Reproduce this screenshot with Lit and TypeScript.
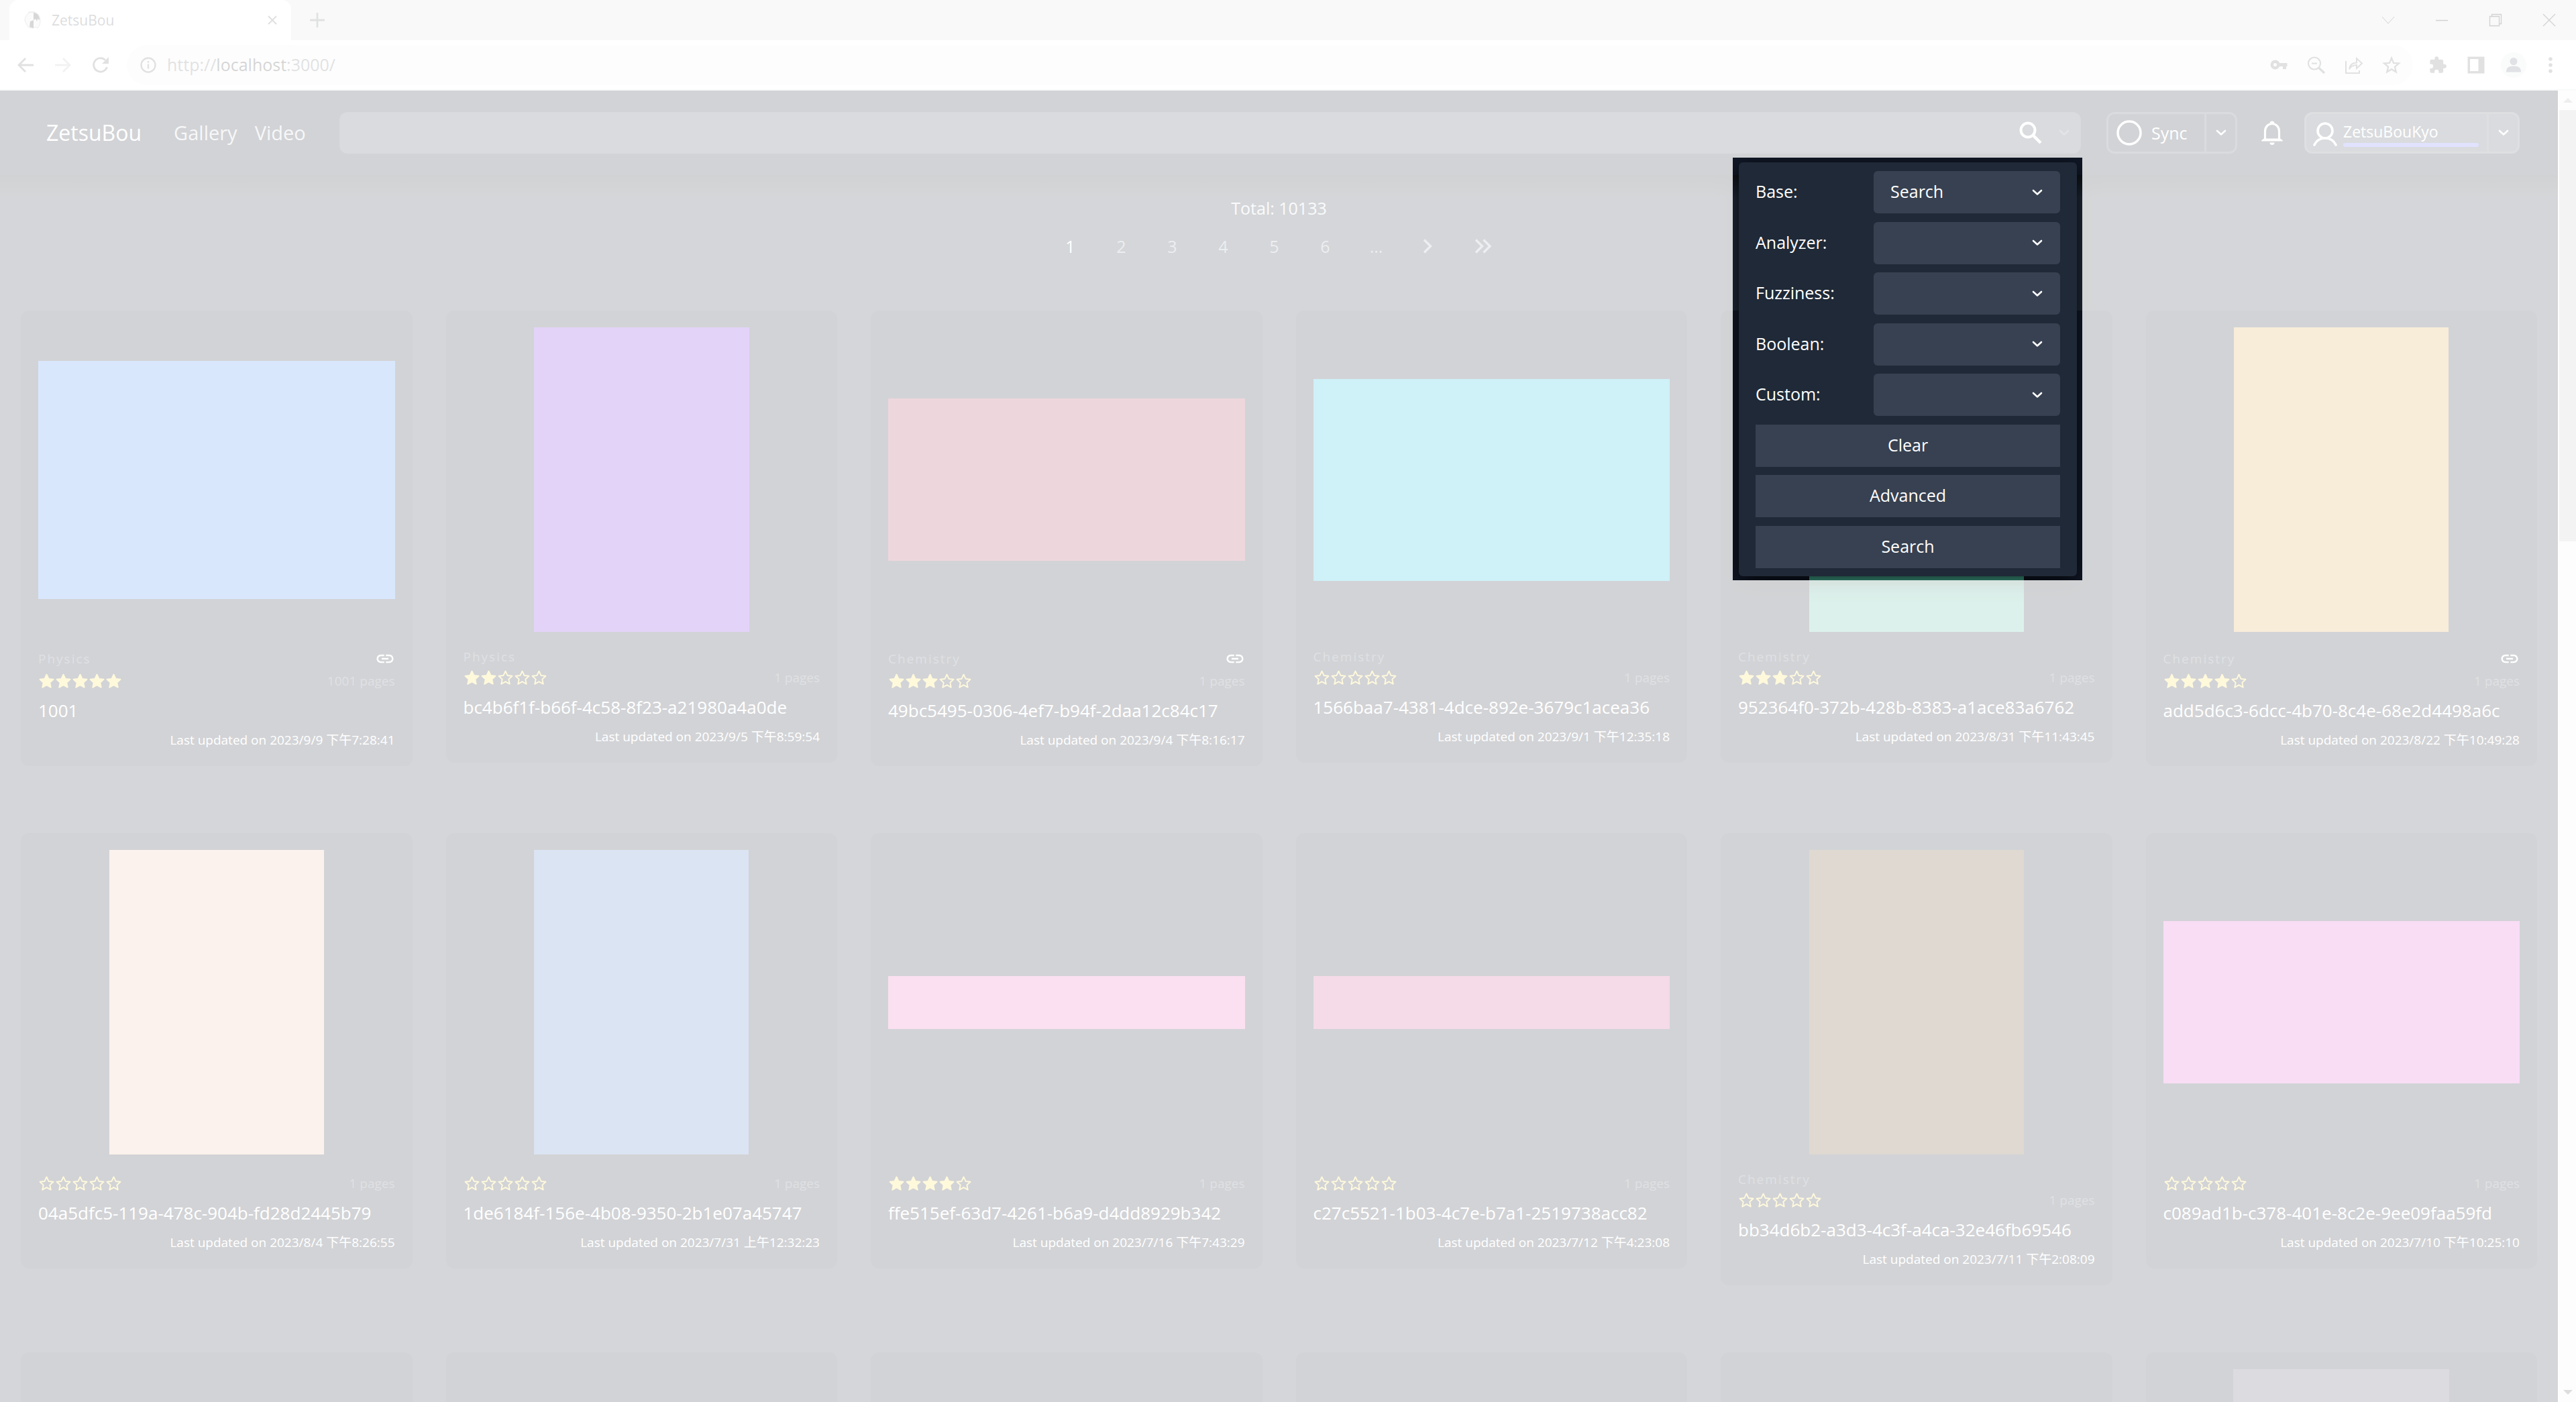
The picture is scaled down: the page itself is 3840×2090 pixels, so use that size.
import { LitElement, html, css, svg } from "lit";
import { customElement, property } from "lit/decorators.js";

interface Item {
  category?: string;
  linked?: boolean;
  rating: number;
  pages: number;
  title: string;
  updated: string;
  color: string;
  w: number;
  h: number;
}

const ITEMS: Item[] = [
  { category: "Physics", linked: true, rating: 5, pages: 1001, title: "1001", updated: "2023/9/9 下午7:28:41", color: "#3782f5", w: 532, h: 355 },
  { category: "Physics", rating: 2, pages: 1, title: "bc4b6f1f-b66f-4c58-8f23-a21980a4a0de", updated: "2023/9/5 下午8:59:54", color: "#6919d7", w: 321, h: 454 },
  { category: "Chemistry", linked: true, rating: 3, pages: 1, title: "49bc5495-0306-4ef7-b94f-2daa12c84c17", updated: "2023/9/4 下午8:16:17", color: "#a02d4b", w: 532, h: 242 },
  { category: "Chemistry", rating: 0, pages: 1, title: "1566baa7-4381-4dce-892e-3679c1acea36", updated: "2023/9/1 下午12:35:18", color: "#00b4d7", w: 532, h: 301 },
  { category: "Chemistry", rating: 3, pages: 1, title: "952364f0-372b-428b-8383-a1ace83a6762", updated: "2023/8/31 下午11:43:45", color: "#46b496", w: 320, h: 454 },
  { category: "Chemistry", linked: true, rating: 4, pages: 1, title: "add5d6c3-6dcc-4b70-8c4e-68e2d4498a6c", updated: "2023/8/22 下午10:49:28", color: "#d7a037", w: 320, h: 454 },
  { rating: 0, pages: 1, title: "04a5dfc5-119a-478c-904b-fd28d2445b79", updated: "2023/8/4 下午8:26:55", color: "#e6b9a0", w: 320, h: 454 },
  { rating: 0, pages: 1, title: "1de6184f-156e-4b08-9350-2b1e07a45747", updated: "2023/7/31 上午12:32:23", color: "#416ebe", w: 320, h: 454 },
  { rating: 4, pages: 1, title: "ffe515ef-63d7-4261-b6a9-d4dd8929b342", updated: "2023/7/16 下午7:43:29", color: "#e15ab4", w: 532, h: 79 },
  { rating: 0, pages: 1, title: "c27c5521-1b03-4c7e-b7a1-2519738acc82", updated: "2023/7/12 下午4:23:08", color: "#c34182", w: 532, h: 79 },
  { category: "Chemistry", rating: 0, pages: 1, title: "bb34d6b2-a3d3-4c3f-a4ca-32e46fb69546", updated: "2023/7/11 下午2:08:09", color: "#573512", w: 320, h: 454 },
  { rating: 0, pages: 1, title: "c089ad1b-c378-401e-8c2e-9ee09faa59fd", updated: "2023/7/10 下午10:25:10", color: "#d74bc8", w: 532, h: 242 },
];

const chevron = html`<svg class="chevron" viewBox="0 0 16 10" aria-hidden="true"><path d="M2 2l6 5.5L14 2" fill="none" stroke="currentColor" stroke-width="2.6" stroke-linecap="round" stroke-linejoin="round"/></svg>`;

const STAR = "M12 2.4l2.9 6.2 6.7.8-5 4.6 1.4 6.8L12 17.4l-6 3.4 1.4-6.8-5-4.6 6.7-.8z";

@customElement("star-rating")
export class StarRating extends LitElement {
  @property({ type: Number }) value = 0;
  static styles = css`
    :host { display: flex; }
    .star { width: 25px; height: 25px; display: block; }
  `;
  render() {
    return [1, 2, 3, 4, 5].map(
      (n) => html`<svg class="star" viewBox="0 0 24 24" aria-hidden="true">
        ${svg`<path d=${STAR} fill=${n <= this.value ? "#fde047" : "none"} stroke="#fde047" stroke-width="1.8" stroke-linejoin="round"/>`}
      </svg>`
    );
  }
}

@customElement("gallery-card")
export class GalleryCard extends LitElement {
  @property({ attribute: false }) item!: Item;
  static styles = css`
    :host { display: block; background: #111827; border-radius: 12px; padding: 25px 26px; color: #fff; }
    .cover { height: 454px; margin-bottom: 25px; display: flex; align-items: center; justify-content: center; }
    .cover-link { display: block; max-width: 100%; }
    .row { display: flex; align-items: center; justify-content: space-between; }
    .category { height: 25px; font-size: 19px; line-height: 25px; letter-spacing: 2px; color: #566072; }
    .category.linked { height: 30px; }
    .link { width: 30px; height: 30px; display: block; color: #fff; }
    .meta { height: 36px; }
    .pages { font-size: 19px; color: #566072; }
    .title { margin: 0; font-size: 26px; line-height: 52px; font-weight: 400; white-space: nowrap; overflow: hidden; }
    .updated { margin: 4px 0 0; font-size: 19px; line-height: 28px; text-align: right; }
  `;
  private details(it: Item) {
    return html`
      ${it.category
        ? html`<div class="row category ${it.linked ? "linked" : ""}">
            <span>${it.category}</span>
            ${it.linked
              ? html`<svg class="link" viewBox="0 0 24 24" aria-hidden="true"><path fill="currentColor" d="M3.9 12c0-1.71 1.39-3.1 3.1-3.1h4V7H7c-2.76 0-5 2.24-5 5s2.24 5 5 5h4v-1.9H7c-1.71 0-3.1-1.39-3.1-3.1zM8 13h8v-2H8v2zm9-6h-4v1.9h4c1.71 0 3.1 1.39 3.1 3.1s-1.39 3.1-3.1 3.1h-4V17h4c2.76 0 5-2.24 5-5s-2.24-5-5-5z"/></svg>`
              : ""}
          </div>`
        : ""}
      <div class="row meta">
        <star-rating .value=${it.rating}></star-rating>
        <span class="pages">${it.pages} pages</span>
      </div>
      <h3 class="title">${it.title}</h3>
      <p class="updated">Last updated on ${it.updated}</p>
    `;
  }
  render() {
    const it = this.item;
    return html`
      <div class="cover">
        <a class="cover-link" href="#" aria-label="Open gallery" style="width:${it.w}px;height:${it.h}px;background:${it.color}"></a>
      </div>
      ${it.title ? this.details(it) : ""}
    `;
  }
}

@customElement("search-panel")
export class SearchPanel extends LitElement {
  static styles = css`
    :host { display: block; position: relative; background: #1f2937; border-radius: 6px; padding: 13px 25px 12px; box-shadow: 0 8px 30px rgba(0, 0, 0, 0.8); font-size: 25px; color: #fff; }
    .fields { display: grid; height: 592px; align-content: space-between; }
    .field { display: grid; grid-template-columns: 176px 1fr; align-items: center; }
    label { padding-bottom: 3px; }
    .select { position: relative; display: flex; align-items: center; }
    .select .chevron { position: absolute; right: 26px; width: 16px; height: 10px; pointer-events: none; }
    select { appearance: none; width: 100%; height: 63px; border: 0; border-radius: 6px; background: #374151; color: #fff; font: inherit; padding: 0 25px 3px; }
    button { height: 63px; border: 0; background: #374151; color: #fff; font: inherit; padding: 0 0 3px; }
    .backdrop { position: absolute; inset: -7px -8px -6px -9px; box-shadow: 0 0 0 4000px rgba(255, 255, 255, 0.81); pointer-events: none; }
  `;
  private field(id: string, label: string, value = "") {
    return html`<div class="field">
      <label for=${id}>${label}:</label>
      <div class="select"><select id=${id}><option>${value}</option></select>${chevron}</div>
    </div>`;
  }
  render() {
    return html`
      <div class="fields">
        ${this.field("base", "Base", "Search")}
        ${this.field("analyzer", "Analyzer")}
        ${this.field("fuzziness", "Fuzziness")}
        ${this.field("boolean", "Boolean")}
        ${this.field("custom", "Custom")}
        <button type="button">Clear</button>
        <button type="button">Advanced</button>
        <button type="button">Search</button>
      </div>
      <div class="backdrop"></div>
    `;
  }
}

@customElement("browser-bar")
export class BrowserBar extends LitElement {
  static styles = css`
    :host { display: block; background: #fff; color: #5f6368; border-bottom: 2px solid #dadce0; }
    * { box-sizing: border-box; }
    svg { display: block; }
    button { border: 0; background: none; padding: 0; color: inherit; display: block; }
    .strip { height: 60px; background: #dfe0e2; display: flex; align-items: center; padding: 0 30px 0 14px; }
    .tab { width: 420px; height: 60px; background: #fff; border-radius: 14px 14px 0 0; display: flex; align-items: center; padding: 0 20px 0 22px; }
    .favicon { width: 26px; height: 28px; margin-right: 15px; }
    .name { flex: 1; font-size: 21px; color: #45484d; }
    .i16 { width: 16px; height: 16px; }
    .i24 { width: 24px; height: 24px; }
    .i28 { width: 28px; height: 28px; }
    .plus { margin-left: 28px; width: 22px; height: 22px; }
    .window { margin-left: auto; display: flex; align-items: center; gap: 60px; color: #111; }
    .window svg { width: 20px; height: 20px; }
    .toolbar { height: 73px; display: flex; align-items: center; padding: 0 31px 0 24px; }
    .nav { display: flex; gap: 28px; margin-right: 25px; }
    .nav .off { color: #bbb; }
    .address { flex: 1; height: 60px; border-radius: 30px; background: #f1f4f3; display: flex; align-items: center; padding: 0 18px 0 20px; }
    .url { flex: 1; margin-left: 16px; font-size: 25px; line-height: 32px; padding-bottom: 2px; display: flex; align-items: center; }
    .url b { font-weight: 400; color: #202124; }
    .actions { display: flex; gap: 28px; }
    .extras { display: flex; align-items: center; gap: 29px; margin-left: 23px; }
    .avatar { width: 38px; height: 38px; border-radius: 50%; background: #e4e6ea; color: #5b6478; display: grid; place-items: center; margin-left: -6px; }
    .dots { width: 14px; height: 28px; }
  `;
  render() {
    return html`
      <div class="strip">
        <div class="tab">
          <svg class="favicon" viewBox="0 0 26 28" aria-hidden="true">
            <path d="M13 2c7 0 11 6 11 13 0 5-2 9-4 11l-3-2-4 2-6-1-3-4-3-6c0-8 5-13 12-13z" fill="#e9e9e9" stroke="#999" stroke-width="1"/>
            <path d="M14 3c6 0 9 5 9 11l-3-2-1 4-2-4-3 2zM9 16l5-2v12l-6-2z" fill="#2b2b2b"/>
            <path d="M6 2h10" stroke="#888" stroke-width="1"/>
          </svg>
          <span class="name">ZetsuBou</span>
          <button aria-label="Close tab"><svg class="i16" viewBox="0 0 16 16"><path d="M2 2l12 12M14 2L2 14" stroke="currentColor" stroke-width="2.2"/></svg></button>
        </div>
        <button aria-label="New tab"><svg class="plus" viewBox="0 0 22 22"><path d="M11 1v20M1 11h20" stroke="currentColor" stroke-width="2.8" stroke-linecap="round"/></svg></button>
        <div class="window">
          <svg viewBox="0 0 20 20"><path d="M1 5l9 10 9-10" fill="none" stroke="currentColor"/></svg>
          <svg viewBox="0 0 20 20"><path d="M1 10.5h18" stroke="currentColor" stroke-width="1.5"/></svg>
          <svg viewBox="0 0 20 20"><path d="M1.5 4.5h14v14h-14zM4.5 4.5v-3h14v14h-3" fill="none" stroke="currentColor" stroke-width="1.3"/></svg>
          <svg viewBox="0 0 20 20"><path d="M1 1l18 18M19 1L1 19" stroke="currentColor" stroke-width="1.2"/></svg>
        </div>
      </div>
      <div class="toolbar">
        <div class="nav">
          <button aria-label="Back"><svg class="i28" viewBox="0 0 28 28"><path d="M26 14H5M14 4L4 14l10 10" fill="none" stroke="currentColor" stroke-width="2.8"/></svg></button>
          <button class="off" aria-label="Forward"><svg class="i28" viewBox="0 0 28 28"><path d="M2 14h21M14 4l10 10-10 10" fill="none" stroke="currentColor" stroke-width="2.8"/></svg></button>
          <button aria-label="Reload"><svg class="i28" viewBox="0 0 28 28"><path d="M23.5 17a10.2 10.2 0 1 1-2.5-10.5" fill="none" stroke="currentColor" stroke-width="2.8"/><path d="M26 2v10H16z" fill="currentColor"/></svg></button>
        </div>
        <div class="address">
          <svg class="i24" viewBox="0 0 24 24"><circle cx="12" cy="12" r="10.5" fill="none" stroke="currentColor" stroke-width="2.4"/><path d="M12 10.5v7M12 6v2.6" stroke="currentColor" stroke-width="2.4"/></svg>
          <span class="url">http://<b>localhost</b>:3000/</span>
          <div class="actions">
            <svg class="i28" viewBox="0 0 28 28"><path fill="currentColor" fill-rule="evenodd" d="M8.5 6.5a7 7 0 1 0 6.6 9.5H20v4h5v-4h1.500v-5H15.100a7 7 0 0 0-6.600-4.500zm0 4.500a2.500 2.500 0 1 1 0 5 2.500 2.500 0 0 1 0-5z"/></svg>
            <svg class="i28" viewBox="0 0 28 28"><g fill="none" stroke="currentColor" stroke-width="2.2"><circle cx="11" cy="11.5" r="9"/><path d="M7 11.5h8"/></g><path d="M17.5 18l8.5 8" stroke="currentColor" stroke-width="3.2"/></svg>
            <svg class="i28" viewBox="0 0 28 28"><g fill="none" stroke="currentColor" stroke-width="2"><path d="M2 8v18h20v-4"/><path d="M7 20c1-7 5-9.5 11-9.5V4l8 7.5-8 7.5v-5c-5 0-8.5 1.5-11 6z"/></g></svg>
            <svg class="i28" viewBox="0 0 24 24"><path d="M12 3l2.6 6.300 6.800.5-5.200 4.400 1.600 6.600-5.800-3.500-5.800 3.500 1.600-6.600-5.200-4.400 6.800-.5z" fill="none" stroke="currentColor" stroke-width="2"/></svg>
          </div>
        </div>
        <div class="extras">
          <svg class="i28" viewBox="0 0 24 24"><path fill="currentColor" d="M20.5 11H19V7a2 2 0 0 0-2-2h-4V3.500a2.500 2.500 0 0 0-5 0V5H4a2 2 0 0 0-2 2v3.800h1.500a2.700 2.700 0 0 1 0 5.400H2V20a2 2 0 0 0 2 2h3.800v-1.500a2.700 2.700 0 0 1 5.400 0V22H17a2 2 0 0 0 2-2v-4h1.500a2.500 2.500 0 0 0 0-5z"/></svg>
          <svg class="i28" viewBox="0 0 28 28"><path fill="currentColor" fill-rule="evenodd" d="M1.5 1.5h25v25h-25zM5 5v18h12.500V5z"/></svg>
          <span class="avatar"><svg class="i24" viewBox="0 0 24 24"><circle cx="12" cy="6.5" r="5.5" fill="currentColor"/><path d="M1 22.5c0-6 3-9 11-9s11 3 11 9z" fill="currentColor"/></svg></span>
          <svg class="dots" viewBox="0 0 14 28"><g fill="currentColor"><circle cx="7" cy="5" r="2.8"/><circle cx="7" cy="14" r="2.8"/><circle cx="7" cy="23" r="2.8"/></g></svg>
        </div>
      </div>
    `;
  }
}

@customElement("app-header")
export class AppHeader extends LitElement {
  static styles = css`
    :host { display: flex; align-items: center; height: 126px; padding: 0 57px 0 69px; background: #111827; color: #fff; box-sizing: border-box; position: relative; }
    * { box-sizing: border-box; }
    svg { display: block; }
    a { color: inherit; text-decoration: none; }
    button { border: 0; background: none; padding: 0; color: inherit; font: inherit; height: 100%; display: flex; align-items: center; justify-content: center; }
    .brand { font-size: 32px; margin-right: 48px; }
    .nav { display: flex; gap: 26px; font-size: 29px; color: #d1d5db; margin-right: 50px; }
    .brand, .nav { padding-bottom: 1px; }
    .search { flex: 1; position: relative; height: 62px; margin-right: 38px; background: #374151; border-radius: 12px; display: flex; align-items: center; padding-right: 17px; }
    .search input { flex: 1; height: 100%; border: 0; background: none; color: #fff; font: inherit; font-size: 25px; padding: 0 20px; outline: none; }
    .find { width: 34px; height: 34px; }
    .chevron { width: 16px; height: 10px; }
    .more { margin-left: 25px; color: #6b7280; }
    .panel { position: absolute; top: 75px; right: 6px; width: 504px; }
    .split { height: 62px; display: flex; border: 3px solid #374151; border-radius: 12px; }
    .split .drop { width: 46px; border-left: 3px solid #374151; }
    .sync { width: 143px; padding-left: 12px; gap: 14px; font-size: 25px; justify-content: flex-start; }
    .ring { width: 38px; height: 38px; }
    .bell { width: 36px; height: 40px; margin: 0 30px 0 34px; }
    .user { background: #374151; border-color: #4b5563; }
    .user .drop { border-color: #4b5563; }
    .who { padding: 0 12px 0 10px; gap: 9px; }
    .person { width: 36px; height: 36px; margin-top: 4px; }
    .account { display: flex; flex-direction: column; align-items: flex-start; width: 202px; font-size: 23px; line-height: 30px; padding-top: 4px; gap: 2px; }
    .quota { width: 100%; height: 6px; border-radius: 3px; background: #6366f1; }
  `;
  render() {
    return html`
      <a class="brand" href="#">ZetsuBou</a>
      <nav class="nav"><a href="#">Gallery</a><a href="#">Video</a></nav>
      <div class="search">
        <input type="text" aria-label="Search galleries" />
        <button aria-label="Search"><svg class="find" viewBox="0 0 34 34"><circle cx="13" cy="13" r="10.5" fill="none" stroke="currentColor" stroke-width="4"/><path d="M21 21l11 11" stroke="currentColor" stroke-width="4.5"/></svg></button>
        <button class="more" aria-label="Search options">${chevron}</button>
        <search-panel class="panel"></search-panel>
      </div>
      <div class="split">
        <button class="sync"><svg class="ring" viewBox="0 0 38 38"><circle cx="19" cy="19" r="17" fill="none" stroke="currentColor" stroke-width="3.5"/></svg>Sync</button>
        <button class="drop" aria-label="Sync options">${chevron}</button>
      </div>
      <button aria-label="Notifications"><svg class="bell" viewBox="0 0 36 40"><path d="M7.5 30V18c0-7 4.5-11.5 10.5-11.5S28.5 11 28.5 18v12" fill="none" stroke="currentColor" stroke-width="3.2"/><path d="M2 32.5c0-2 2-2.500 4-4h24c2 1.500 4 2 4 4zM14.500 6a3.500 3.500 0 0 1 7 0zM14.500 34.500h7a3.500 3.500 0 0 1-7 0z" fill="currentColor"/></svg></button>
      <div class="split user">
        <button class="who">
          <svg class="person" viewBox="0 0 36 36"><g fill="none" stroke="currentColor" stroke-width="3.6" stroke-linecap="round"><circle cx="18" cy="13" r="11"/><path d="M2 34c2.5-5.5 7-10 16-10s13.5 4.5 16 10"/></g></svg>
          <span class="account"><span>ZetsuBouKyo</span><span class="quota"></span></span>
        </button>
        <button class="drop" aria-label="Account menu">${chevron}</button>
      </div>
    `;
  }
}

@customElement("app-root")
export class AppRoot extends LitElement {
  static styles = css`
    :host { display: flex; flex-direction: column; height: 100vh; overflow: hidden; font-family: "Open Sans", "Noto Sans CJK TC", sans-serif; background: #1f2937; }
    .view { flex: 1; min-height: 0; display: flex; }
    .page { flex: 1; min-width: 0; color: #fff; }
    .top { z-index: 2; }
    .summary { margin: 0; padding-top: 33px; padding-bottom: 1px; font-size: 25px; line-height: 32px; text-align: center; color: #e5e7eb; background: linear-gradient(rgba(0, 0, 0, 0.55), rgba(0, 0, 0, 0.35) 12px, transparent 34px); }
    .pager { display: flex; justify-content: center; align-items: center; height: 36px; margin: 22px 0 78px; font-size: 25px; }
    .pager a { width: 76px; text-align: center; color: #9ca3af; text-decoration: none; display: flex; justify-content: center; }
    .pager .current { color: #fff; }
    .pager .last { width: 90px; }
    .arrow { height: 24px; display: block; }
    .grid { display: grid; grid-template-columns: repeat(6, minmax(0, 1fr)); gap: 100px 50px; align-items: start; padding: 0 31px; }
    .scroll { width: 27px; background: #f1f1f1; border-left: 2px solid #fff; box-sizing: border-box; display: flex; flex-direction: column; align-items: center; }
    .scroll svg { width: 14px; height: 29px; display: block; }
    .thumb { width: 100%; height: 643px; background: #c1c1c1; margin-bottom: auto; }
  `;
  render() {
    const pending: Item = { rating: 0, pages: 0, title: "", updated: "", color: "transparent", w: 0, h: 0 };
    const cards = [...ITEMS, pending, pending, pending, pending, pending, { ...pending, color: "#46465a", w: 322, h: 454 }];
    return html`
      <browser-bar></browser-bar>
      <div class="view">
        <main class="page">
          <app-header class="top"></app-header>
          <p class="summary">Total: 10133</p>
          <nav class="pager" aria-label="Pages">
            <a class="current" href="#">1</a>
            ${["2", "3", "4", "5", "6", "..."].map((n) => html`<a href="#">${n}</a>`)}
            <a href="#" aria-label="Next page"><svg class="arrow" viewBox="0 0 16 24"><path d="M3 2.5l9.5 9.5L3 21.5" fill="none" stroke="currentColor" stroke-width="3.4"/></svg></a>
            <a class="last" href="#" aria-label="Last page"><svg class="arrow" viewBox="0 0 28 24"><path d="M3 2.5l9.5 9.5L3 21.5M14.5 2.5L24 12l-9.5 9.5" fill="none" stroke="currentColor" stroke-width="3.4"/></svg></a>
          </nav>
          <section class="grid">${cards.map((it) => html`<gallery-card .item=${it}></gallery-card>`)}</section>
        </main>
        <div class="scroll" aria-hidden="true">
          <svg viewBox="0 0 14 29"><path d="M0 18l7-7 7 7z" fill="#a3a3a3"/></svg>
          <div class="thumb"></div>
          <svg viewBox="0 0 14 29"><path d="M0 11l7 7 7-7z" fill="#505050"/></svg>
        </div>
      </div>
    `;
  }
}
